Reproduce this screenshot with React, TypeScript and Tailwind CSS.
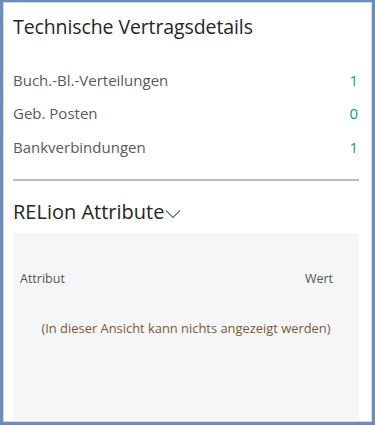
const rows = [
  { label: "Buch.-Bl.-Verteilungen", value: "1" },
  { label: "Geb. Posten", value: "0" },
  { label: "Bankverbindungen", value: "1" },
];

export default function App() {
  return (
    <div
      className="w-[375px] h-[425px] bg-[#6b8cbd] pl-[3px] pt-[2px] pr-[3px] pb-[3px]"
      style={{ fontFamily: '"Open Sans", "Noto Sans", sans-serif' }}
    >
      <div className="h-full border border-[#d5d9e0] bg-white flex flex-col pl-[9px] pr-[12px]">
        {/* Header */}
        <div className="pt-[11px] pb-[23px]">
          <h2 className="text-[19.5px] leading-[26px] text-[#262626] tracking-[-0.1px]">
            Technische Vertragsdetails
          </h2>
        </div>

        {/* Counts */}
        <div className="flex flex-col">
          {rows.map((r) => (
            <div key={r.label} className="flex items-center justify-between h-[33.5px]">
              <span className="text-[15px] text-[#5a5a5a]">{r.label}</span>
              <span className="text-[15px] text-[#23959a] pr-[1px]">{r.value}</span>
            </div>
          ))}
        </div>

        <div className="mt-[15.5px] h-[2px] bg-[#b6bcc6]" />

        {/* Attribute section */}
        <div className="pt-[18px] pb-[8px] flex items-center">
          <span className="text-[20px] leading-[26px] text-[#262626]">RELion Attribute</span>
          <svg width="16" height="10" viewBox="0 0 16 10" className="ml-[1px] mt-[3px]">
            <path d="M1 1.5 L8 8.5 L15 1.5" fill="none" stroke="#666" strokeWidth="1.1" />
          </svg>
        </div>

        <div className="flex-1 bg-[#f5f6f8] flex flex-col px-[7px] mb-[1px]">
          <div className="flex justify-between pt-[37px] text-[12.5px] leading-[17px] text-[#555]">
            <span>Attribut</span>
            <span className="pr-[19px]">Wert</span>
          </div>
          <div className="pt-[33px] text-center text-[12.9px] leading-[17px] text-[#7a5a35]">
            (In dieser Ansicht kann nichts angezeigt werden)
          </div>
        </div>
      </div>
    </div>
  );
}
